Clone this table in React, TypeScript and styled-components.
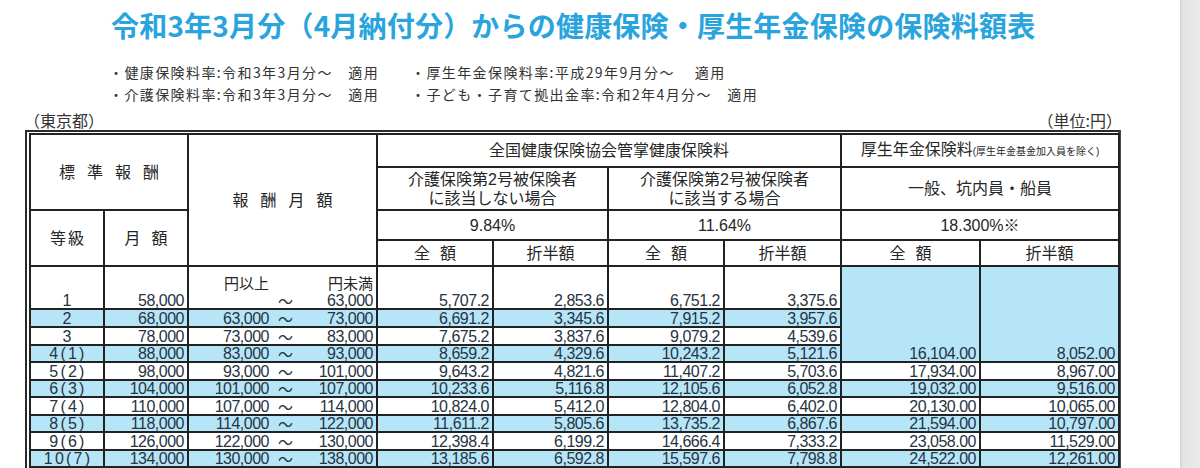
import React from 'react';
import styled, { createGlobalStyle } from 'styled-components';

const Global = createGlobalStyle`
  html, body { margin: 0; padding: 0; background: #fff; }
  body {
    font-family: "Liberation Sans", "Noto Sans CJK JP", sans-serif;
    color: #333;
    overflow: hidden;
  }
`;

const Page = styled.div`
  display: flex;
  width: 1200px;
  height: 468px;
  overflow: hidden;
`;

const Sheet = styled.main`
  width: 1180px;
  flex: none;
  background: #fff;
`;

const Gutter = styled.div`
  flex: 1;
  background: linear-gradient(to right, #d2d2d2 0, #e4e4e4 3px, #ebebeb 100%);
`;

const Title = styled.h1`
  margin: 8px 0 0 111px;
  font-family: "Noto Sans CJK JP", sans-serif;
  font-size: 28px;
  line-height: 34px;
  font-weight: 700;
  color: #29a4dc;
  white-space: nowrap;
  letter-spacing: 0.2px;
`;

const Notes = styled.ul`
  list-style: none;
  margin: 19px 0 0 109px;
  padding: 0;
  display: grid;
  grid-template-columns: 302px auto;
  font-family: "Noto Sans CJK JP", sans-serif;
  font-size: 14px;
  line-height: 22px;
  letter-spacing: 1.4px;
  color: #333;
  white-space: nowrap;
`;

const Caption = styled.div`
  display: flex;
  justify-content: space-between;
  margin: 6px 0 0 24px;
  width: 1098px;
  font-family: "Noto Sans CJK JP", sans-serif;
  font-size: 16px;
  line-height: 18px;
  color: #333;
`;

const Frame = styled.div`
  margin: 1px 0 0 25px;
  width: 1096px;
  box-sizing: border-box;
  border-left: 2px solid #2a2a2a;
  border-top: 2px solid #2a2a2a;
  border-right: 3px solid #4a4a4a;
  padding: 1px 0 0 2px;
`;

const Table = styled.table`
  width: 1089px;
  border-collapse: collapse;
  table-layout: fixed;
`;

const Row = styled.tr<{ $h: number; $blue?: boolean }>`
  height: ${(p) => p.$h}px;
  background: ${(p) => (p.$blue ? '#b6e5f8' : 'transparent')};
`;

const HeadCell = styled.td`
  border: 2px solid #222;
  padding: 0;
  text-align: center;
  vertical-align: middle;
  font-family: "Liberation Sans", "Noto Sans CJK JP", sans-serif;
  font-size: 16px;
  line-height: 19px;
  color: #262626;
  white-space: nowrap;
`;

const Small = styled.span`
  font-size: 10px;
  letter-spacing: 0;
`;

const DataCell = styled.td<{ $blue?: boolean }>`
  border: 2px solid #222;
  padding: 0 3px 0 0;
  text-align: right;
  vertical-align: bottom;
  font-size: 16px;
  line-height: 14px;
  letter-spacing: -0.5px;
  color: #263443;
  white-space: nowrap;
  background: ${(p) => (p.$blue ? '#b6e5f8' : 'transparent')};
`;

const GradeCell = styled(DataCell)`
  text-align: center;
  padding: 0 0 0 2px;
  letter-spacing: 2.2px;
`;

const Range = styled.div`
  display: grid;
  grid-template-columns: 80px 30px 1fr;
  align-items: end;
`;

const RangeHead = styled.span`
  font-family: "Noto Sans CJK JP", sans-serif;
  font-size: 15px;
  line-height: 22px;
  letter-spacing: 0;
  color: #262626;
`;

const Tilde = styled.span`
  text-align: center;
  padding-left: 3px;
  font-family: "Noto Sans CJK JP", sans-serif;
  font-size: 15px;
  line-height: 14px;
  letter-spacing: 0;
`;

const Spread = styled.span<{ $gap: number }>`
  display: inline-flex;
  gap: ${(p) => p.$gap}px;
`;

function Spaced({ text, gap }: { text: string; gap: number }) {
  return (
    <Spread $gap={gap}>
      {[...text].map((c, i) => (
        <span key={i}>{c}</span>
      ))}
    </Spread>
  );
}

type R = {
  grade: string;
  std: string;
  from: string;
  to: string;
  v: string[];
  pension?: string[];
};

const rows: R[] = [
  { grade: '1', std: '58,000', from: '', to: '63,000', v: ['5,707.2', '2,853.6', '6,751.2', '3,375.6'] },
  { grade: '2', std: '68,000', from: '63,000', to: '73,000', v: ['6,691.2', '3,345.6', '7,915.2', '3,957.6'] },
  { grade: '3', std: '78,000', from: '73,000', to: '83,000', v: ['7,675.2', '3,837.6', '9,079.2', '4,539.6'] },
  { grade: '4(1)', std: '88,000', from: '83,000', to: '93,000', v: ['8,659.2', '4,329.6', '10,243.2', '5,121.6'] },
  { grade: '5(2)', std: '98,000', from: '93,000', to: '101,000', v: ['9,643.2', '4,821.6', '11,407.2', '5,703.6'], pension: ['17,934.00', '8,967.00'] },
  { grade: '6(3)', std: '104,000', from: '101,000', to: '107,000', v: ['10,233.6', '5,116.8', '12,105.6', '6,052.8'], pension: ['19,032.00', '9,516.00'] },
  { grade: '7(4)', std: '110,000', from: '107,000', to: '114,000', v: ['10,824.0', '5,412.0', '12,804.0', '6,402.0'], pension: ['20,130.00', '10,065.00'] },
  { grade: '8(5)', std: '118,000', from: '114,000', to: '122,000', v: ['11,611.2', '5,805.6', '13,735.2', '6,867.6'], pension: ['21,594.00', '10,797.00'] },
  { grade: '9(6)', std: '126,000', from: '122,000', to: '130,000', v: ['12,398.4', '6,199.2', '14,666.4', '7,333.2'], pension: ['23,058.00', '11,529.00'] },
  { grade: '10(7)', std: '134,000', from: '130,000', to: '138,000', v: ['13,185.6', '6,592.8', '15,597.6', '7,798.8'], pension: ['24,522.00', '12,261.00'] },
];

const heights = [43, 18, 18, 17, 18, 17, 18, 17, 18, 17];
const cols = [74, 84, 189, 116, 115, 116, 117, 139, 139];

export default function App() {
  return (
    <Page>
      <Global />
      <Sheet>
        <Title>令和3年3月分（4月納付分）からの健康保険・厚生年金保険の保険料額表</Title>
        <Notes>
          <li>・健康保険料率:令和3年3月分～　適用</li>
          <li>・厚生年金保険料率:平成29年9月分～　 適用</li>
          <li>・介護保険料率:令和3年3月分～　適用</li>
          <li>・子ども・子育て拠出金率:令和2年4月分～　適用</li>
        </Notes>
        <Caption>
          <span>（東京都）</span>
          <span>（単位:円）</span>
        </Caption>
        <Frame>
          <Table>
            <colgroup>
              {cols.map((w, i) => (
                <col key={i} style={{ width: w }} />
              ))}
            </colgroup>
            <thead>
              <Row $h={33}>
                <HeadCell colSpan={2} rowSpan={2}>
                  <Spaced text="標準報酬" gap={12} />
                </HeadCell>
                <HeadCell rowSpan={4}>
                  <Spaced text="報酬月額" gap={12} />
                </HeadCell>
                <HeadCell colSpan={4}>全国健康保険協会管掌健康保険料</HeadCell>
                <HeadCell colSpan={2}>
                  厚生年金保険料<Small>(厚生年金基金加入員を除く)</Small>
                </HeadCell>
              </Row>
              <Row $h={43}>
                <HeadCell colSpan={2}>
                  介護保険第2号被保険者
                  <br />
                  に該当しない場合
                </HeadCell>
                <HeadCell colSpan={2}>
                  介護保険第2号被保険者
                  <br />
                  に該当する場合
                </HeadCell>
                <HeadCell colSpan={2}>一般、坑内員・船員</HeadCell>
              </Row>
              <Row $h={30}>
                <HeadCell rowSpan={2}>
                  <Spaced text="等級" gap={2} />
                </HeadCell>
                <HeadCell rowSpan={2}>
                  <Spaced text="月額" gap={11} />
                </HeadCell>
                <HeadCell colSpan={2}>9.84%</HeadCell>
                <HeadCell colSpan={2}>11.64%</HeadCell>
                <HeadCell colSpan={2}>18.300%※</HeadCell>
              </Row>
              <Row $h={26}>
                <HeadCell>
                  <Spaced text="全額" gap={10} />
                </HeadCell>
                <HeadCell>折半額</HeadCell>
                <HeadCell>
                  <Spaced text="全額" gap={10} />
                </HeadCell>
                <HeadCell>折半額</HeadCell>
                <HeadCell>
                  <Spaced text="全額" gap={10} />
                </HeadCell>
                <HeadCell>折半額</HeadCell>
              </Row>
            </thead>
            <tbody>
              {rows.map((r, i) => (
                <Row key={i} $h={heights[i]} $blue={i % 2 === 1}>
                  <GradeCell>{r.grade}</GradeCell>
                  <DataCell>{r.std}</DataCell>
                  <DataCell>
                    <Range>
                      {i === 0 && (
                        <>
                          <RangeHead>円以上</RangeHead>
                          <span />
                          <RangeHead>円未満</RangeHead>
                        </>
                      )}
                      <span>{r.from}</span>
                      <Tilde>～</Tilde>
                      <span>{r.to}</span>
                    </Range>
                  </DataCell>
                  {r.v.map((x, j) => (
                    <DataCell key={j}>{x}</DataCell>
                  ))}
                  {i === 0 && (
                    <>
                      <DataCell rowSpan={4} $blue>16,104.00</DataCell>
                      <DataCell rowSpan={4} $blue>8,052.00</DataCell>
                    </>
                  )}
                  {r.pension &&
                    r.pension.map((x, j) => <DataCell key={`p${j}`}>{x}</DataCell>)}
                </Row>
              ))}
            </tbody>
          </Table>
        </Frame>
      </Sheet>
      <Gutter />
    </Page>
  );
}
